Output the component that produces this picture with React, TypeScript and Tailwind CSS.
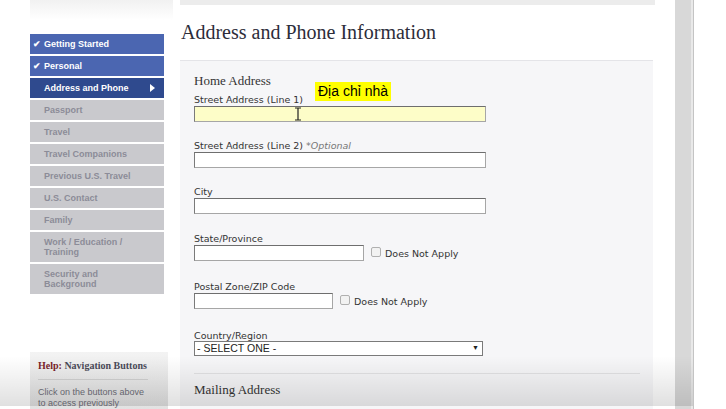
import React from 'react'

const NAV = [
  { label: 'Getting Started', state: 'done' },
  { label: 'Personal', state: 'done' },
  { label: 'Address and Phone', state: 'active' },
  { label: 'Passport', state: 'todo' },
  { label: 'Travel', state: 'todo' },
  { label: 'Travel Companions', state: 'todo' },
  { label: 'Previous U.S. Travel', state: 'todo' },
  { label: 'U.S. Contact', state: 'todo' },
  { label: 'Family', state: 'todo' },
  { label: 'Work / Education / Training', state: 'todo', tall: true },
  { label: 'Security and Background', state: 'todo', tall: true },
]

const sans = { fontFamily: '"Liberation Sans", Arial, sans-serif' }
const verdana = { fontFamily: '"DejaVu Sans", Verdana, sans-serif' }
const serif = { fontFamily: '"Liberation Serif", "Times New Roman", serif' }

function NavItem({ label, state, tall }: { label: string; state: string; tall?: boolean }) {
  const bg =
    state === 'done' ? 'bg-[#4b66b1] text-white' :
    state === 'active' ? 'bg-[#2f4a8e] text-white' :
    'bg-[#c9c9cd] text-[#8c8c98]'
  return (
    <div
      className={`flex items-center ${tall ? 'h-[30px]' : 'h-[20px]'} ${bg} text-[9px] font-bold leading-[10px]`}
      style={sans}
    >
      <span className="w-[14px] shrink-0 pl-[3px] text-[9px]">{state === 'done' ? '✔' : ''}</span>
      <span className={tall ? 'w-[90px]' : 'flex-1'}>{label}</span>
      {state === 'active' && (
        <svg width="6" height="8" viewBox="0 0 6 8" className="mr-[8px]">
          <path d="M0 0 L5 4 L0 8 Z" fill="#fff" />
        </svg>
      )}
    </div>
  )
}

function Label({ children }: { children: React.ReactNode }) {
  return (
    <div className="h-[12px] pt-[1px] text-[9.5px] leading-[12px] text-[#333]" style={verdana}>{children}</div>
  )
}

function Input({ w, yellow }: { w: string; yellow?: boolean }) {
  return (
    <div
      className={`${w} h-[16px] border border-[#a6a6a6] border-t-[#6e6e6e] border-l-[#7a7a7a] ${yellow ? 'bg-[#fdfdc8]' : 'bg-white'}`}
    />
  )
}

function NotApply() {
  return (
    <div className="ml-[7px] flex items-start gap-[4px] pt-[2px]">
      <div className="h-[10px] w-[10px] rounded-[2px] border border-[#b0b0b0] bg-[#f2f2f2]" />
      <span className="mt-[1px] text-[9.5px] leading-[12px] text-[#333]" style={verdana}>Does Not Apply</span>
    </div>
  )
}

export default function App() {
  return (
    <div className="relative flex h-[409px] w-[726px] overflow-hidden bg-white">
      {/* left column */}
      <div className="flex w-[180px] shrink-0 flex-col pl-[30px]">
        <div className="h-[20px] w-[143px] bg-gradient-to-b from-[#f1f1f1] to-white" />
        <div className="mt-[14px] flex w-[134px] flex-col gap-[2px]">
          {NAV.map(n => <NavItem key={n.label} {...n} />)}
        </div>
        <div className="mt-[58px] flex w-[138px] flex-1 flex-col bg-gradient-to-b from-[#f3f3f3] to-[#e2e2e2] px-[8px] pt-[8px]">
          <div className="text-[10px] font-bold leading-[12px] text-[#4a4a58]" style={serif}>
            <span className="text-[#7a1f2a]">Help:</span> Navigation Buttons
          </div>
          <div className="mt-[7px] h-px w-[110px] bg-[#d2d2d2]" />
          <div className="mt-[7px] text-[9px] leading-[11px] text-[#6e6e78]" style={sans}>
            Click on the buttons above<br />to access previously
          </div>
        </div>
      </div>

      {/* main */}
      <div className="flex w-[495px] shrink-0 flex-col">
        <div className="h-[5px] w-[475px] bg-[#ececec]" />
        <div className="ml-[1px] mt-[15px] text-[20px] leading-[24px] text-[#2d2d3a]" style={serif}>
          Address and Phone Information
        </div>
        <div className="mt-[16px] flex w-[473px] flex-1 flex-col border-t border-[#e4e4e8] bg-[#f6f6f8] pl-[14px] pt-[12px]">
          <div className="h-[15px] text-[13px] leading-[15px] text-[#333]" style={serif}>Home Address</div>
          <div className="relative mt-[5px]">
            <Label>Street Address (Line 1)</Label>
            <div className="absolute left-[121px] top-[-11px] bg-[#ffff00] px-[3px] text-[14px] leading-[19px] text-black" style={sans}>
              Địa chỉ nhà
            </div>
          </div>
          <div className="relative mt-[1px]">
            <Input w="w-[292px]" yellow />
            <svg width="8" height="14" viewBox="0 0 8 14" className="absolute left-[100px] top-[1px]">
              <path d="M1 1 H7 M4 1 V13 M1 13 H7" stroke="#222" strokeWidth="1.2" fill="none" />
            </svg>
          </div>

          <div className="mt-[17px]">
            <Label>Street Address (Line 2) <span className="italic text-[#777]">*Optional</span></Label>
          </div>
          <div className="mt-[1px]"><Input w="w-[292px]" /></div>

          <div className="mt-[17px]"><Label>City</Label></div>
          <div className="mt-[1px]"><Input w="w-[292px]" /></div>

          <div className="mt-[18px]"><Label>State/Province</Label></div>
          <div className="mt-[1px] flex">
            <Input w="w-[170px]" />
            <NotApply />
          </div>

          <div className="mt-[19px]"><Label>Postal Zone/ZIP Code</Label></div>
          <div className="mt-[1px] flex">
            <Input w="w-[139px]" />
            <NotApply />
          </div>

          <div className="mt-[20px]"><Label>Country/Region</Label></div>
          <div
            className="flex h-[15px] w-[289px] items-center justify-between border border-[#7a7a7a] bg-white pl-[2px] pr-[3px] text-[10.5px] text-[#222]"
            style={sans}
          >
            <span>- SELECT ONE -</span>
            <span className="text-[7px]">▼</span>
          </div>

          <div className="mt-[17px] h-px w-[446px] bg-[#e2e2e4]" />
          <div className="mt-[8px] text-[13px] leading-[15px] text-[#333]" style={serif}>Mailing Address</div>
        </div>
      </div>

      {/* scrollbar / edge */}
      <div className="w-[16px] shrink-0 bg-[#d8d8d8]" />
      <div className="w-[2px] shrink-0 bg-[#e9e9e9]" />
      <div className="w-[1px] shrink-0 bg-[#c4c4c4]" />
      <div className="flex-1 bg-white" />

      {/* bottom video shading */}
      <div className="pointer-events-none absolute bottom-[3px] left-0 h-[50px] w-[693px] bg-gradient-to-b from-transparent to-[rgba(0,0,0,0.12)]" />
    </div>
  )
}
